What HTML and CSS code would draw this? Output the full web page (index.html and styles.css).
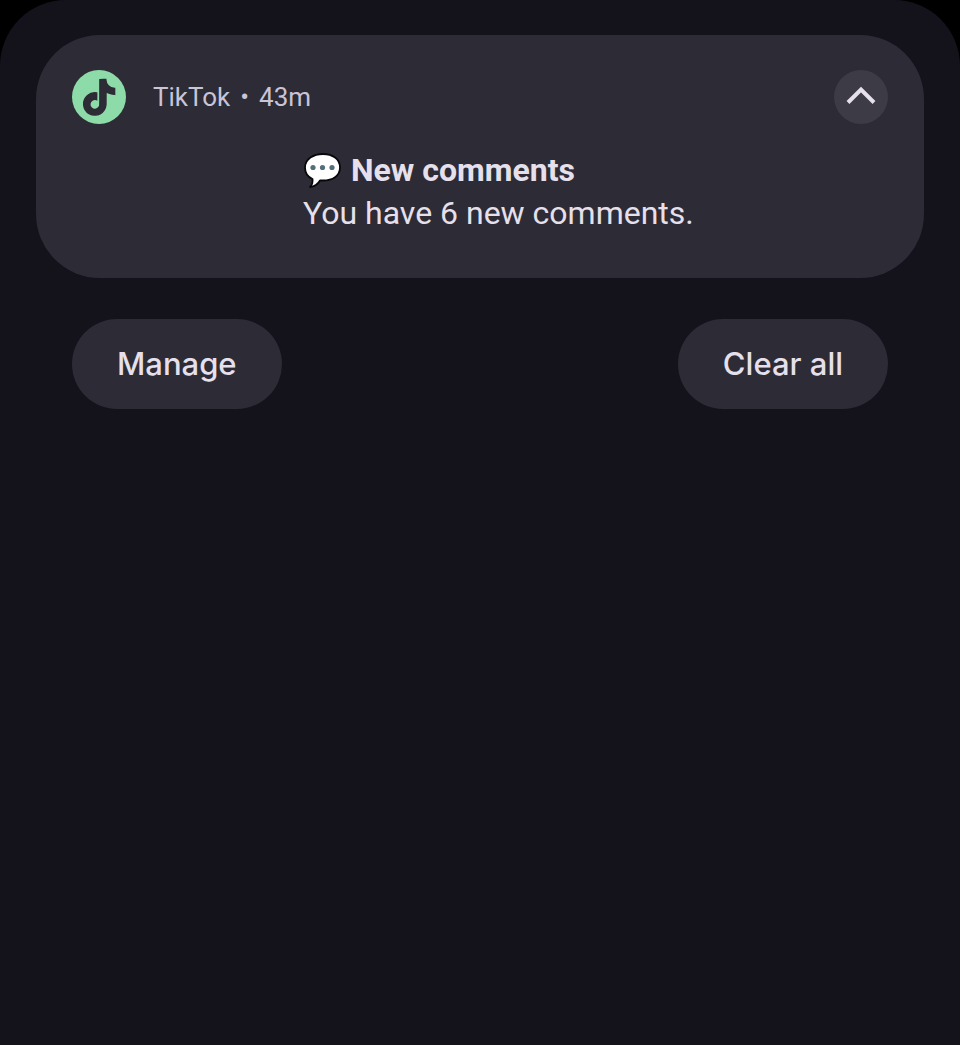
FILE: index.html
```html
<!DOCTYPE html>
<html lang="en">
<head>
    <meta charset="UTF-8">
    <title>Notifications</title>
    <meta name="viewport" content="width=device-width, initial-scale=1">
    <link rel="stylesheet" href="styles.css">
</head>
<body>
<main class="shade">
  <article class="card">
    <header class="card-header">
      <svg class="app-icon" viewBox="0 0 54 54" aria-hidden="true">
        <circle cx="27" cy="27" r="27" fill="#8ddba8"/>
        <path transform="translate(9.4 9.6) scale(1.48)" fill="#2d2b35" stroke="#2d2b35" stroke-width="1" d="M12.525.02c1.31-.02 2.61-.01 3.91-.02.08 1.53.63 3.09 1.75 4.17 1.12 1.11 2.7 1.62 4.24 1.79v4.03c-1.44-.05-2.89-.35-4.2-.97-.57-.26-1.1-.59-1.62-.93-.01 2.92.01 5.84-.02 8.75-.08 1.4-.54 2.79-1.35 3.94-1.31 1.92-3.58 3.17-5.91 3.21-1.43.08-2.86-.31-4.08-1.03-2.02-1.19-3.44-3.37-3.65-5.71-.02-.5-.03-1-.01-1.49.18-1.9 1.12-3.72 2.58-4.96 1.66-1.44 3.98-2.13 6.15-1.72.02 1.48-.04 2.96-.04 4.44-.99-.32-2.15-.23-3.02.37-.63.41-1.11 1.04-1.36 1.75-.21.51-.15 1.07-.14 1.61.24 1.64 1.82 3.02 3.5 2.87 1.12-.01 2.19-.66 2.77-1.61.19-.33.4-.67.41-1.06.1-1.79.06-3.57.07-5.36.01-4.03-.01-8.05.02-12.07z"/>
      </svg>
      <p class="meta"><span>TikTok</span><span>•</span><span>43m</span></p>
      <button class="collapse" type="button" aria-label="Collapse">
        <svg viewBox="0 0 54 54" aria-hidden="true">
          <path d="M14 32.500 27 19.500 40 32.500" fill="none" stroke="#e6e0ec" stroke-width="4"/>
        </svg>
      </button>
    </header>
    <div class="message">
      <h1 class="title">
        <svg class="bubble" viewBox="0 0 38 36" aria-hidden="true">
          <path d="M20 1C29.500 1 37 6 37 14.500S29.500 27.500 20 27.500H17C15 31 11.500 33.500 7 34 9 32 10 29.500 9.500 26 5 24 2 20.500 2 14.500 2 6 10.500 1 20 1z" fill="#fff" stroke="#08080a" stroke-width="1.800" stroke-linejoin="round"/>
          <g fill="#546e7a"><circle cx="10" cy="14.500" r="2.600"/><circle cx="19.500" cy="14.500" r="2.600"/><circle cx="29" cy="14.500" r="2.600"/></g>
        </svg>
        New comments
      </h1>
      <p class="text">You have 6 new comments.</p>
    </div>
  </article>
  <div class="actions">
    <button class="pill" type="button">Manage</button>
    <button class="pill" type="button">Clear all</button>
  </div>
</main>
</body>
</html>
```
FILE: styles.css
```css
* {
  box-sizing: border-box;
}

body {
  margin: 0;
  background-color: #000;
  color: #e6e0ec;
  font-family: Roboto, sans-serif;
}

.shade {
  min-height: 100vh;
  padding: 35px 36px;
  background-color: #14121b;
  border-radius: 66px 66px 0 0;
}

.card {
  padding: 35px 36px 43px;
  background-color: #2d2b35;
  border-radius: 64px;
}

.card-header {
  display: flex;
  align-items: center;
}

.app-icon {
  width: 54px;
  height: 54px;
}

.meta {
  display: flex;
  flex: 1;
  gap: 10px;
  margin: 0 0 0 27px;
  color: #c9c4d6;
  font-size: 26px;
  line-height: 32px;
}

.collapse {
  width: 54px;
  height: 54px;
  padding: 0;
  border: none;
  border-radius: 50%;
  background-color: #3d3b45;
}

.collapse svg {
  display: block;
}

/* the text block starts right of the empty picture column */
.message {
  margin-top: 25px;
  padding-left: 231px;
}

.title {
  display: flex;
  align-items: center;
  gap: 10px;
  margin: 0;
  font-size: 32px;
  font-weight: 700;
  line-height: 43px;
}

.bubble {
  width: 38px;
  height: 36px;
}

.text {
  margin: 0;
  font-size: 32px;
  line-height: 43px;
}

.actions {
  display: flex;
  justify-content: space-between;
  margin-top: 41px;
  padding: 0 36px;
}

.pill {
  height: 90px;
  padding: 0 45px 2px;
  border: none;
  border-radius: 45px;
  background-color: #2d2b35;
  color: #e6e0ec;
  font-family: Inter, sans-serif;
  font-size: 31px;
  font-weight: 500;
}
```
